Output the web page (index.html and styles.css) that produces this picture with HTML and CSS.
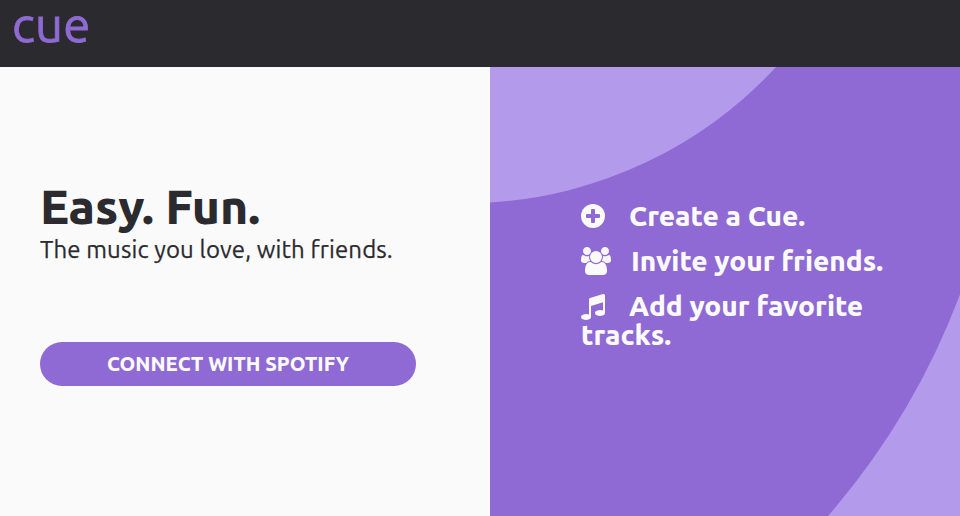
FILE: index.html
```html
<!DOCTYPE html>
<html lang="en">
<head>
<meta charset="utf-8">
<title>cue</title>
<link rel="stylesheet" href="styles.css">
</head>
<body>
<header class="topbar"><a class="logo">cue</a></header>
<main class="split">
  <section class="intro">
    <h1 class="headline">Easy. Fun.</h1>
    <p class="tagline">The music you love, with friends.</p>
    <button class="connect"><span>CONNECT WITH SPOTIFY</span></button>
  </section>
  <section class="features">
    <svg class="backdrop" viewBox="490 67 470 449" aria-hidden="true">
      <path d="M490 67H776A425 425 0 0 1 490 202.5Z"/>
      <path d="M960 294.5A733 733 0 0 1 828 516H960Z"/>
    </svg>
    <ul class="steps">
      <li><svg class="icon plus" viewBox="0 0 24 24"><path fill-rule="evenodd" d="M12 0a12 12 0 1 1 0 24a12 12 0 0 1 0-24ZM11 5a1 1 0 0 0-1 1v4H6a1 1 0 0 0-1 1v2a1 1 0 0 0 1 1h4v4a1 1 0 0 0 1 1h2a1 1 0 0 0 1-1v-4h4a1 1 0 0 0 1-1v-2a1 1 0 0 0-1-1h-4V6a1 1 0 0 0-1-1Z"/></svg><span class="create">Create a Cue.</span></li>
      <li><svg class="icon group" viewBox="0 0 1920 1792"><path d="M593 896q-162 5-265 128H194q-82 0-138-40.500T0 865q0-353 124-353 6 0 43.500 21t97.500 42.500T384 597q67 0 133-23-5 37-5 66 0 139 81 256zm1071 637q0 120-73 189.500t-194 69.500H523q-121 0-194-69.500T256 1533q0-53 3.500-103.500t14-109T300 1212t43-97.500 62-81 85.500-53.500T602 960q10 0 43 21.500t73 48 107 48 135 21.500 135-21.500 107-48 73-48 43-21.500q61 0 111.500 20t85.500 53.500 62 81 43 97.500 26.500 108.500 14 109 3.500 103.500zM640 256q0 106-75 181t-181 75-181-75-75-181 75-181T384 0t181 75 75 181zm704 384q0 159-112.500 271.500T960 1024 688.500 911.500 576 640t112.500-271.500T960 256t271.500 112.500T1344 640zm576 225q0 78-56 118.500t-138 40.500h-134q-103-123-265-128 81-117 81-256 0-29-5-66 66 23 133 23 59 0 119-21.500t97.500-42.500 43.500-21q124 0 124 353zm-128-609q0 106-75 181t-181 75-181-75-75-181 75-181 181-75 181 75 75 181z"/></svg><span class="invite">Invite your friends.</span></li>
      <li><svg class="icon note" viewBox="0 0 1536 1664"><path d="M1536 96v1120q0 50-34 89t-86 60.500-103.500 32T1216 1408t-96.500-10.500-103.500-32-86-60.500-34-89 34-89 86-60.500 103.500-32T1216 1024q105 0 192 39V526L640 763v709q0 50-34 89t-86 60.500-103.500 32T320 1664t-96.500-10.500-103.500-32T34 1561t-34-89 34-89 86-60.500 103.500-32T320 1280q105 0 192 39V352q0-31 19-56.500t49-35.500l832-256q12-4 28-4 40 0 68 28t28 68z"/></svg><span class="add">Add your favorite</span> <span class="tracks">tracks.</span></li>
    </ul>
  </section>
</main>
</body>
</html>
```
FILE: styles.css
```css
* { box-sizing: border-box; margin: 0; padding: 0; }
body {
  width: 960px; height: 516px; overflow: hidden;
  display: flex; flex-direction: column;
  background: #fafafa; color: #2b2a2f;
  font-family: Ubuntu, "Noto Sans", sans-serif;
}
.topbar { height: 67px; flex: none; padding-left: 12px; background: #2b2a2f; }
.logo { display: block; color: #8f6ad4; font-size: 49px; line-height: 48px; letter-spacing: 0.2px; -webkit-text-stroke: 0.8px #8f6ad4; }
.split { flex: 1; display: grid; grid-template-columns: 490px 470px; }
.intro { padding: 112px 40px 0; }
.headline { font-size: 48px; font-weight: 800; line-height: 55px; white-space: nowrap; }
.tagline { font-size: 24px; line-height: 32px; letter-spacing: 0.12px; -webkit-text-stroke: 0.25px #2b2a2f; white-space: nowrap; }
.connect {
  display: block; width: 376px; height: 44px; margin-top: 76px;
  border: 0; border-radius: 22px; background: #8f6ad4; color: #fafafa;
  font: 800 20px/44px Ubuntu, "Noto Sans", sans-serif; white-space: nowrap;
}
.features { position: relative; background: #8f6ad4; padding: 135px 0 0 91px; }
.backdrop { position: absolute; inset: 0; width: 100%; height: 100%; fill: #b39aeb; }
.steps { position: relative; width: 320px; list-style: none; color: #fafafa; font-size: 28px; font-weight: 800; line-height: 29px; }
.steps li { margin-bottom: 16px; }
.steps span { display: inline-block; position: relative; top: -1px; white-space: nowrap; }
.icon { fill: currentColor; vertical-align: top; }
.plus { width: 24px; height: 24px; margin: 2px 24px 0 0; }
.group { width: 30px; height: 28px; margin-right: 20px; }
.note { width: 24px; height: 26px; margin: 2px 24px 0 0; }
```
